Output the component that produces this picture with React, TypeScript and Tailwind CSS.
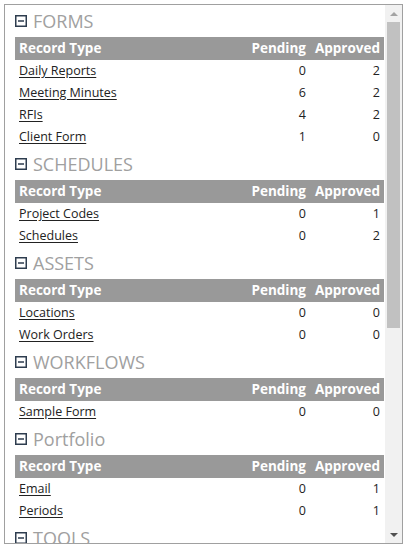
import type { ReactNode } from 'react';

interface RecordRow {
  name: string;
  pending: number;
  approved: number;
}

interface Section {
  title: string;
  rows: RecordRow[];
}

const sections: Section[] = [
  {
    title: 'FORMS',
    rows: [
      { name: 'Daily Reports', pending: 0, approved: 2 },
      { name: 'Meeting Minutes', pending: 6, approved: 2 },
      { name: 'RFIs', pending: 4, approved: 2 },
      { name: 'Client Form', pending: 1, approved: 0 },
    ],
  },
  {
    title: 'SCHEDULES',
    rows: [
      { name: 'Project Codes', pending: 0, approved: 1 },
      { name: 'Schedules', pending: 0, approved: 2 },
    ],
  },
  {
    title: 'ASSETS',
    rows: [
      { name: 'Locations', pending: 0, approved: 0 },
      { name: 'Work Orders', pending: 0, approved: 0 },
    ],
  },
  {
    title: 'WORKFLOWS',
    rows: [{ name: 'Sample Form', pending: 0, approved: 0 }],
  },
  {
    title: 'Portfolio',
    rows: [
      { name: 'Email', pending: 0, approved: 1 },
      { name: 'Periods', pending: 0, approved: 1 },
    ],
  },
  {
    title: 'TOOLS',
    rows: [
      { name: 'Inspections', pending: 0, approved: 0 },
      { name: 'Punch List', pending: 0, approved: 0 },
    ],
  },
];

// collapse icon: square with a minus
function CollapseIcon() {
  return (
    <svg width="12" height="12" viewBox="0 0 12 12" className="shrink-0">
      <rect x="0.75" y="0.75" width="10.5" height="10.5" fill="none" stroke="#2e3d4f" strokeWidth="1.5" />
      <rect x="3" y="5.25" width="6" height="1.5" fill="#2e3d4f" />
    </svg>
  );
}

function Cell({ children, right }: { children: ReactNode; right?: boolean }) {
  return <td className={right ? 'px-1 text-right' : 'px-1 text-left'}>{children}</td>;
}

function SectionBlock({ section }: { section: Section }) {
  return (
    <div>
      <div className="flex h-[32px] items-center gap-[6px]">
        <CollapseIcon />
        <span className="text-[18px] leading-none text-[#a0a0a0]">{section.title}</span>
      </div>
      <table className="w-full table-fixed border-collapse">
        <thead>
          <tr className="h-[23px] bg-[#999999] text-[13.5px] font-bold text-white">
            <th className="px-1 text-left">Record Type</th>
            <th className="w-[70px] px-1 text-right">Pending</th>
            <th className="w-[74px] px-1 text-right">Approved</th>
          </tr>
        </thead>
        <tbody>
          {section.rows.map((row) => (
            <tr key={row.name} className="h-[22px] text-[12.5px] text-[#222]">
              <Cell>
                <a href="#" className="underline underline-offset-2">{row.name}</a>
              </Cell>
              <Cell right>{row.pending}</Cell>
              <Cell right>{row.approved}</Cell>
            </tr>
          ))}
        </tbody>
      </table>
    </div>
  );
}

function Scrollbar() {
  return (
    <div className="flex w-[17px] shrink-0 flex-col bg-[#f1f1f1]">
      <div className="flex h-[17px] items-center justify-center">
        <div className="h-0 w-0 border-x-[4px] border-b-[4px] border-x-transparent border-b-[#a3a3a3]" />
      </div>
      <div className="flex-1 px-[2px]">
        <div className="h-[306px] bg-[#c1c1c1]" />
      </div>
      <div className="flex h-[17px] items-center justify-center">
        <div className="h-0 w-0 border-x-[4px] border-t-[4px] border-x-transparent border-t-[#505050]" />
      </div>
    </div>
  );
}

export default function App() {
  return (
    <div className="h-[548px] w-[409px] bg-white p-[4px] font-['Open_Sans',sans-serif]">
      <div className="flex h-[540px] w-[399px] border border-[#a0a0a0] bg-white">
        <div className="flex-1 overflow-hidden pl-[10px] pr-[1px]">
          {sections.map((s) => (
            <SectionBlock key={s.title} section={s} />
          ))}
        </div>
        <Scrollbar />
      </div>
    </div>
  );
}
